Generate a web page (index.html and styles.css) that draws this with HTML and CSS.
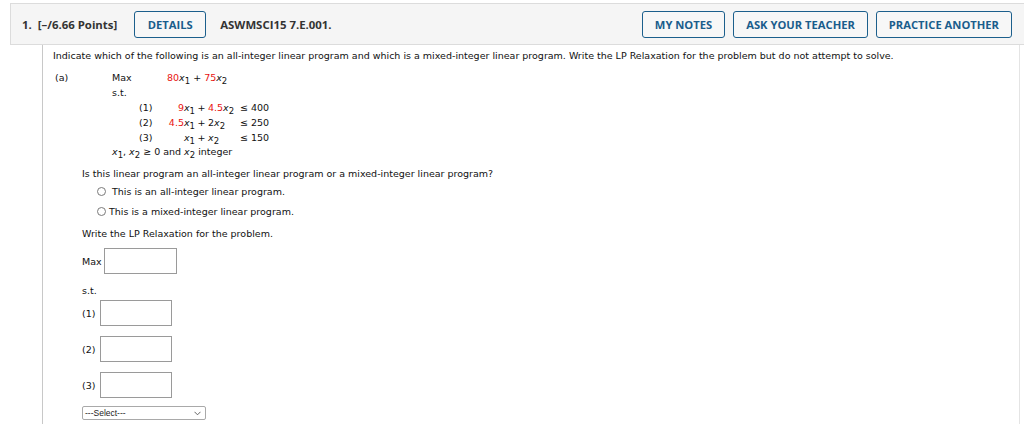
FILE: index.html
```html
<!DOCTYPE html>
<html>
<head>
<meta charset="utf-8">
<link rel="stylesheet" href="styles.css">
</head>
<body>
<div class="question">
  <div class="qhead">
    <span class="qnum">1.</span>
    <span class="pts">[–/6.66 Points]</span>
    <span class="btn btn-details">DETAILS</span>
    <span class="code">ASWMSCI15 7.E.001.</span>
    <span class="spacer"></span>
    <span class="btn">MY NOTES</span>
    <span class="btn">ASK YOUR TEACHER</span>
    <span class="btn">PRACTICE ANOTHER</span>
  </div>
  <div class="qbody">
    <p class="intro">Indicate which of the following is an all-integer linear program and which is a mixed-integer linear program. Write the LP Relaxation for the problem but do not attempt to solve.</p>
    <div class="part">
      <div class="plabel">(a)</div>
      <div class="model">
        <div class="mrow"><span class="mlab">Max</span><span class="obj"><span class="red">80</span><i>x</i><sub>1</sub> + <span class="red">75</span><i>x</i><sub>2</sub></span></div>
        <div class="mrow">s.t.</div>
        <table class="cons">
          <colgroup><col class="w-cn"><col class="w-c1"><col class="w-pl"><col class="w-c2"><col class="w-le"><col class="w-rhs"></colgroup>
          <tr><td>(1)</td><td class="c1"><span class="red">9</span><i>x</i><sub>1</sub></td><td class="pl">+</td><td><span class="red">4.5</span><i>x</i><sub>2</sub></td><td>≤</td><td>400</td></tr>
          <tr><td>(2)</td><td class="c1"><span class="red">4.5</span><i>x</i><sub>1</sub></td><td class="pl">+</td><td>2<i>x</i><sub>2</sub></td><td>≤</td><td>250</td></tr>
          <tr><td>(3)</td><td class="c1"><i>x</i><sub>1</sub></td><td class="pl">+</td><td><i>x</i><sub>2</sub></td><td>≤</td><td>150</td></tr>
        </table>
        <div class="mline"><i>x</i><sub>1</sub>, <i>x</i><sub>2</sub> ≥ 0 and <i>x</i><sub>2</sub> integer</div>
      </div>
    </div>
    <div class="answers">
      <p class="ask">Is this linear program an all-integer linear program or a mixed-integer linear program?</p>
      <label class="radio r1"><span class="circle"></span><span>This is an all-integer linear program.</span></label>
      <label class="radio r2"><span class="circle"></span><span>This is a mixed-integer linear program.</span></label>
      <p class="ask write">Write the LP Relaxation for the problem.</p>
      <div class="maxrow"><span>Max</span><span class="box box-max"></span></div>
      <div class="st">s.t.</div>
      <div class="crow first"><span>(1)</span><span class="box"></span></div>
      <div class="crow"><span>(2)</span><span class="box"></span></div>
      <div class="crow"><span>(3)</span><span class="box"></span></div>
      <div class="select"><span>---Select---</span><svg width="7" height="5" viewBox="0 0 7 5"><path d="M0.5 0.8 L3.5 3.8 L6.5 0.8" fill="none" stroke="#555" stroke-width="0.9"/></svg></div>
    </div>
  </div>
</div>
</body>
</html>
```

FILE: styles.css
```css
html, body {
  margin: 0;
  padding: 0;
  background: #fff;
}
body {
  overflow: hidden;
  width: 1024px;
  height: 424px;
}
.question {
  margin: 3px 0 0 10px;
  width: 1014px;
}
.qhead {
  display: flex;
  align-items: center;
  height: 40px;
  background: #f5f5f5;
  border: 1px solid #dcdcdc;
  border-right: none;
  padding: 0 0 0 11px;
  font-family: "Open Sans", sans-serif;
  font-weight: 700;
  font-size: 11.4px;
  color: #333;
}
.qnum {
  margin-right: 6px;
}
.pts {
  margin-right: 17px;
}
.btn {
  display: inline-flex;
  align-items: center;
  justify-content: center;
  box-sizing: border-box;
  height: 27px;
  padding: 0 12px;
  border: 1px solid #1c5f8c;
  border-radius: 3px;
  color: #1a5d8c;
  background: #f7f7f7;
  font-size: 11.2px;
}
.btn-details {
  width: 72px;
  margin-right: 14px;
}
.spacer {
  flex: 1;
}
.qhead .btn + .btn {
  margin-left: 8px;
}
.qhead .btn:last-child {
  margin-right: 12px;
}
.qbody {
  margin-left: 32px;
  width: 978px;
  height: 380px;
  border-left: 1px solid #c8c8c8;
  border-right: 1px solid #e4e4e4;
  box-sizing: border-box;
  padding: 5px 0 0 10px;
  font-family: "DejaVu Sans", Verdana, sans-serif;
  font-size: 9.5px;
  color: #111;
}
p {
  margin: 0;
}
.intro {
  line-height: 12px;
}
.part {
  display: flex;
  margin-top: 8px;
}
.plabel {
  width: 57px;
  padding-left: 2px;
  line-height: 15px;
}
.model {
  line-height: 15px;
}
.mrow {
  display: flex;
  white-space: nowrap;
}
.mline {
  white-space: nowrap;
  line-height: 13px;
}
.mlab {
  width: 55px;
}
.red {
  color: #e8130f;
}
i {
  font-style: italic;
}
sub {
  font-size: 8.5px;
  vertical-align: -3px;
  line-height: 0;
}
.cons {
  border-collapse: collapse;
  table-layout: fixed;
  width: 132px;
  margin-left: 27px;
}
.w-cn { width: 22px; }
.w-c1 { width: 34px; }
.w-pl { width: 13px; }
.w-c2 { width: 32px; }
.w-le { width: 11px; }
.w-rhs { width: 20px; }
.cons td {
  padding: 0;
  height: 15px;
  line-height: 15px;
  white-space: nowrap;
  overflow: visible;
}
.cons .c1 {
  text-align: right;
}
.cons .pl {
  text-align: center;
}
.answers {
  margin-left: 29px;
  margin-top: 9px;
}
.ask {
  line-height: 14px;
}
.radio {
  display: flex;
  align-items: center;
  height: 20px;
  padding-left: 15px;
}
.circle {
  box-sizing: border-box;
  width: 9px;
  height: 9px;
  border: 1px solid #7a7a7a;
  border-radius: 50%;
  background: #fff;
}
.r1 .circle {
  margin-right: 6px;
}
.r2 .circle {
  margin-right: 3px;
}
.write {
  margin-top: 6px;
}
.maxrow {
  display: flex;
  align-items: center;
  margin-top: 7px;
}
.box {
  box-sizing: border-box;
  display: inline-block;
  width: 72px;
  height: 26px;
  border: 1px solid #9a9a9a;
  background: #fff;
}
.box-max {
  width: 73px;
  margin-left: 2px;
}
.st {
  margin-top: 10px;
  line-height: 14px;
}
.crow {
  display: flex;
  align-items: center;
  margin-top: 10px;
}
.crow.first {
  margin-top: 2px;
}
.crow .box {
  margin-left: 5px;
}
.select {
  display: flex;
  align-items: center;
  justify-content: space-between;
  box-sizing: border-box;
  width: 124px;
  height: 14px;
  margin-top: 8px;
  padding: 0 4px 0 2px;
  border: 1px solid #a9a9a9;
  border-radius: 2px;
  font-family: "Liberation Sans", Arial, sans-serif;
  font-size: 8.5px;
  color: #222;
}
```
